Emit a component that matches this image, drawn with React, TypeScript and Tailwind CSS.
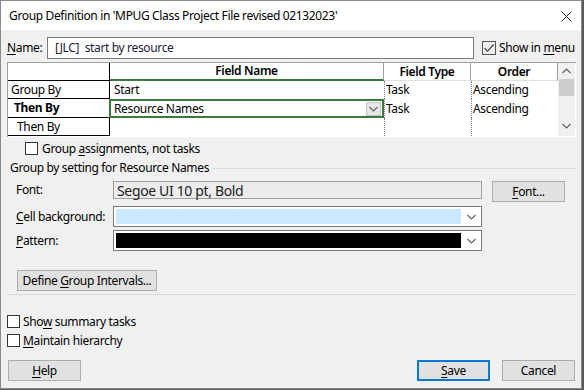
import React from 'react'

const font = { fontFamily: '"Noto Sans", "Open Sans", sans-serif' }

function U({ children }: { children: React.ReactNode }) {
  return <span className="underline underline-offset-[2px] decoration-[1px]">{children}</span>
}

function Box({ checked = false }: { checked?: boolean }) {
  return (
    <div className="w-[13px] h-[13px] border border-[#333] bg-white flex items-center justify-center shrink-0">
      {checked && (
        <svg width="11" height="11" viewBox="0 0 11 11">
          <path d="M1.5 5.5 L4.2 8.3 L9.6 2.2" fill="none" stroke="#333" strokeWidth="1.2" />
        </svg>
      )}
    </div>
  )
}

function Chevron({ up = false, color = '#606060' }: { up?: boolean; color?: string }) {
  return (
    <svg width="9" height="6" viewBox="0 0 9 6">
      <path d={up ? 'M0.5 5 L4.5 1 L8.5 5' : 'M0.5 1 L4.5 5 L8.5 1'} fill="none" stroke={color} strokeWidth="1.1" />
    </svg>
  )
}

function Btn({ children, w = 'w-[73px]', primary = false }: { children: React.ReactNode; w?: string; primary?: boolean }) {
  return (
    <div
      className={`${w} h-[21px] flex items-center justify-center bg-[#e1e1e1] text-[12px] text-black ${
        primary ? 'border-2 border-[#0078d7]' : 'border border-[#adadad]'
      }`}
    >
      {children}
    </div>
  )
}

function Dropdown({ fill }: { fill: string }) {
  return (
    <div className="w-[369px] h-[21px] border border-[#7a7a7a] bg-white flex items-center pl-[2px]">
      <div className={`w-[345px] h-[15px] ${fill}`} />
      <div className="flex-1 flex justify-center">
        <Chevron />
      </div>
    </div>
  )
}

export default function App() {
  return (
    <div className="w-[584px] h-[390px] bg-[#5a5a5a] tracking-[-0.35px]" style={font}>
      <div className="w-[582px] h-[389px] border border-[#8a8a8a] bg-[#f0f0f0] flex flex-col">
        {/* title bar */}
        <div className="h-[29px] bg-white flex items-center justify-between pl-[8px] pr-[9px] pt-[1px] shrink-0">
          <span className="text-[12px] text-black">Group Definition in 'MPUG Class Project File revised 02132023'</span>
          <svg width="11" height="11" viewBox="0 0 11 11">
            <path d="M0.5 0.5 L10.5 10.5 M10.5 0.5 L0.5 10.5" stroke="#222" strokeWidth="1" />
          </svg>
        </div>

        <div className="flex flex-col pl-[6px] text-[12px] text-black">
          {/* name row */}
          <div className="flex items-center h-[22px] mt-[7px]">
            <span className="w-[40px]"><U>N</U>ame:</span>
            <div className="w-[427px] h-[22px] border border-[#7a7a7a] bg-white flex items-center pl-[7px] text-[#1b1b3a]">
              [JLC]&nbsp; start by resource
            </div>
            <div className="ml-[8px] w-[14px] h-[14px] border border-[#555] bg-[#f0f0f0] flex items-center justify-center">
              <svg width="12" height="12" viewBox="0 0 12 12">
                <path d="M1.5 6 L4.6 9.2 L10.6 2.5" fill="none" stroke="#444" strokeWidth="1.2" />
              </svg>
            </div>
            <span className="ml-[3px] whitespace-nowrap">Show in <U>m</U>enu</span>
          </div>

          {/* grid */}
          <div className="mt-[3px] w-[569px] h-[75px] flex border-t border-l border-[#a0a0a0] bg-white">
            <div className="grid grid-cols-[102px_274px_87px_87px] grid-rows-[18px_18px_19px_18px] h-[73px]">
              {/* header */}
              <div className="border-r border-b border-black bg-white" />
              <div className="border-r border-[#a0a0a0] border-b-2 border-b-[#3c7a3c] flex items-center justify-center font-semibold">
                Field Name
              </div>
              <div className="border-r border-[#a0a0a0] border-b border-b-[#e0e0e0] flex items-center justify-center font-semibold">
                Field Type
              </div>
              <div className="border-r border-[#a0a0a0] border-b border-b-[#e0e0e0] flex items-center justify-center font-semibold">
                Order
              </div>

              {/* row 1 */}
              <div className="border-r border-b border-black flex items-center pl-[3px]">Group By</div>
              <div className="flex items-center pl-[4px]">Start</div>
              <div className="border-l border-dotted border-[#808080] flex items-center pl-[1px]">Task</div>
              <div className="border-l border-dotted border-[#808080] flex items-center pl-[1px]">Ascending</div>

              {/* row 2 */}
              <div className="border-r border-b border-black flex items-center pl-[6px] font-bold">Then By</div>
              <div className="border-2 border-[#3c7a3c] -ml-[1px] flex items-center justify-between pl-[3px] pr-[1px]">
                <span>Resource Names</span>
                <div className="w-[15px] h-[14px] bg-[#e6e6e6] border border-[#c8c8c8] flex items-center justify-center">
                  <Chevron />
                </div>
              </div>
              <div className="border-l border-dotted border-[#808080] flex items-center pl-[1px]">Task</div>
              <div className="border-l border-dotted border-[#808080] flex items-center pl-[1px]">Ascending</div>

              {/* row 3 */}
              <div className="border-r border-b border-black flex items-center pl-[9px]">Then By</div>
              <div />
              <div className="border-l border-dotted border-[#808080]" />
              <div className="border-l border-dotted border-[#808080]" />
            </div>

            {/* scrollbar */}
            <div className="w-[17px] h-[73px] bg-[#f0f0f0] flex flex-col items-center">
              <div className="h-[16px] flex items-center">
                <Chevron up />
              </div>
              <div className="w-[15px] h-[17px] bg-[#cdcdcd]" />
              <div className="flex-1" />
              <div className="h-[16px] flex items-center mb-[2px]">
                <Chevron />
              </div>
            </div>
          </div>

          {/* group assignments */}
          <div className="flex items-center mt-[5px] ml-[18px] h-[13px]">
            <Box />
            <span className="ml-[4px]">Group <U>a</U>ssignments, not tasks</span>
          </div>

          {/* group box label */}
          <div className="flex items-center mt-[5px] h-[16px]">
            <span className="ml-[3px] whitespace-nowrap">Group by setting for Resource Names</span>
            <div className="ml-[3px] flex-1 mr-[5px] h-px bg-[#dcdcdc]" />
          </div>

          {/* font row */}
          <div className="flex items-start mt-[5px]">
            <span className="w-[106px] pl-[9px] h-[18px] flex items-center">Font:</span>
            <div className="w-[369px] h-[18px] border border-[#a0a0a0] bg-[#ececec] flex items-center pl-[3px] text-[14px] text-[#222]">
              Segoe UI 10 pt, Bold
            </div>
            <div className="ml-[10px]">
              <Btn><span><U>F</U>ont...</span></Btn>
            </div>
          </div>

          {/* cell background */}
          <div className="flex items-center mt-[4px]">
            <span className="w-[106px] pl-[9px]"><U>C</U>ell background:</span>
            <Dropdown fill="bg-[#cce8ff]" />
          </div>

          {/* pattern */}
          <div className="flex items-center mt-[3px]">
            <span className="w-[106px] pl-[9px]"><U>P</U>attern:</span>
            <Dropdown fill="bg-black" />
          </div>

          <div className="mt-[19px] ml-[10px]">
            <Btn w="w-[140px]"><span>Define <U>G</U>roup Intervals...</span></Btn>
          </div>

          <div className="mt-[3px] w-[569px] h-px bg-[#d8d8d8]" />

          <div className="flex items-center mt-[20px] h-[13px]">
            <Box />
            <span className="ml-[3px]">Sho<U>w</U> summary tasks</span>
          </div>
          <div className="flex items-center mt-[6px] h-[13px]">
            <Box />
            <span className="ml-[3px]"><U>M</U>aintain hierarchy</span>
          </div>

          <div className="flex items-center mt-[13px] pr-[6px]">
            <div className="ml-[1px]">
              <Btn><span><U>H</U>elp</span></Btn>
            </div>
            <div className="flex-1" />
            <Btn primary><span><U>S</U>ave</span></Btn>
            <div className="ml-[12px]">
              <Btn>Cancel</Btn>
            </div>
          </div>
        </div>
      </div>
    </div>
  )
}
